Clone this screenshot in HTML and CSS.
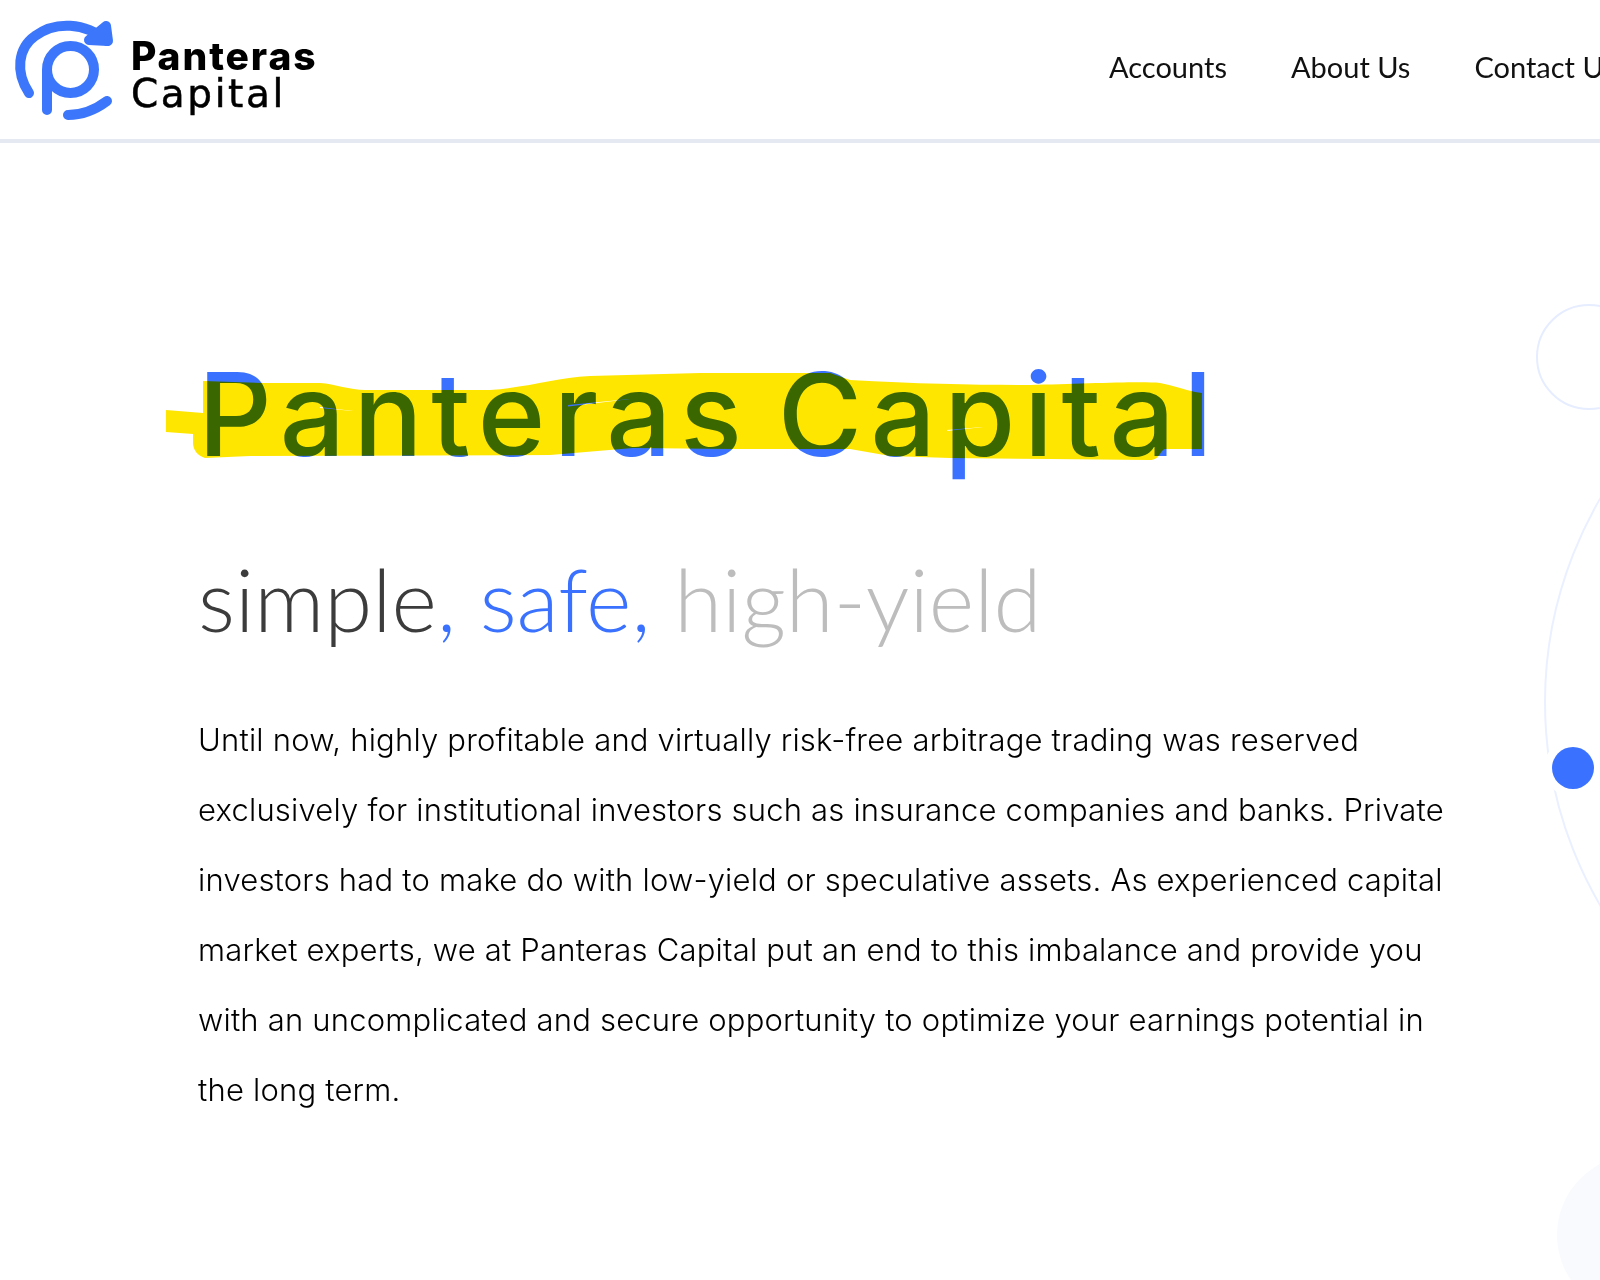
FILE: index.html
```html
<!DOCTYPE html>
<html lang="en">
<head>
    <meta charset="UTF-8">
    <meta name="viewport" content="width=device-width, initial-scale=1.0">
    <title>Panteras Capital</title>
    <link rel="stylesheet" href="styles.css">
</head>
<body>
    <header class="site-header">
        <a class="logo" href="#">
            <svg class="logo-mark" viewBox="0 0 110 120" width="110" height="120">
                <g fill="none" stroke="#3b76fb" stroke-width="10" stroke-linecap="round" stroke-linejoin="round">
                    <path d="M19 83 C5 62 8 38 25 26 C45 11 75 12 97 31"/>
                    <path d="M37 100 V59.5 A23.5 23.5 0 1 1 60.5 83 A23.5 23.5 0 0 1 37 59.5"/>
                    <path d="M58 105 C72 105 85 100 97 91"/>
                    <path d="M96 16 L98 31 L79 30 Z" fill="#3b76fb"/>
                </g>
            </svg>
            <span class="logo-text"><b>Panteras</b><span>Capital</span></span>
        </a>
        <nav class="main-nav">
            <a href="#">Accounts</a>
            <a href="#">About Us</a>
            <a href="#">Contact Us</a>
        </nav>
    </header>

    <main class="hero">
        <div class="decor" aria-hidden="true">
            <div class="ring-small"></div>
            <div class="ring-big"></div>
            <div class="dot"></div>
            <div class="blob"></div>
        </div>

        <div class="title-wrap">
            <h1>Panteras Capital</h1>
            <svg class="marker" viewBox="0 0 1050 95" width="1050" height="95">
                <path fill="#ffe600" fill-rule="evenodd" d="M6 40 L43 43 L43 11 L102 13 L160 13 C175 14 190 20 205 20 L330 20 C370 17 395 8 430 6 L540 3 L670 3 L690 10 C760 14 820 15 870 15 C920 14 980 11 1000 13 C1012 15 1025 20 1035 22 L1042 23 L1042 79 L1005 79 C1000 80 1000 90 990 90 L890 89 L790 88 L730 86 L690 79 L573 79 L473 78 L390 85 L90 86 L45 88 C38 86 33 80 33 73 L33 64 L6 62 Z M160 37 L193 41 L160 38 Z M408 35 L470 29 L408 36.5 Z M787 60 L823 57 L787 61 Z"/>
            </svg>
        </div>

        <h2 class="tagline">simple<span class="blue">, safe,</span> <span class="grey">high-yield</span></h2>

        <p class="intro">Until now, highly profitable and virtually risk-free arbitrage trading was reserved exclusively for institutional investors such as insurance companies and banks. Private investors had to make do with low-yield or speculative assets. As experienced capital market experts, we at Panteras Capital put an end to this imbalance and provide you with an uncomplicated and secure opportunity to optimize your earnings potential in the long term.</p>
    </main>
</body>
</html>
```

FILE: styles.css
```css
html, body {
    margin: 0;
    padding: 0;
    height: 1280px;
    overflow: hidden;
    background-color: #fff;
}
body {
    font-family: "Lato", "Liberation Sans", sans-serif;
    color: #111;
}
a {
    color: inherit;
    text-decoration: none;
}
.site-header {
    height: 143px;
    box-sizing: border-box;
    border-bottom: 4px solid #e4e9f2;
    display: grid;
    grid-template-columns: 1109px 1fr;
    align-items: start;
    white-space: nowrap;
}
.logo {
    display: flex;
    align-items: center;
    gap: 11px;
    margin: 10px 0 0 10px;
}
.logo-text {
    display: flex;
    flex-direction: column;
    margin-top: 9px;
    font-family: "DejaVu Sans", sans-serif;
    font-size: 39px;
    line-height: 38px;
    letter-spacing: 2.6px;
    -webkit-text-stroke: 0.5px #000;
    color: #000;
}
.logo-text b {
    font-family: "Inter", sans-serif;
    font-weight: 800;
    letter-spacing: 1.9px;
    -webkit-text-stroke: 0;
}
.main-nav {
    display: flex;
    gap: 64px;
    margin-top: 50px;
    font-size: 29px;
    line-height: 34px;
}
.hero {
    position: relative;
    height: 1137px;
    padding: 214px 0 0 198px;
    box-sizing: border-box;
}
.title-wrap {
    position: relative;
    height: 115px;
}
h1 {
    margin: 0;
    font-family: "Inter", sans-serif;
    font-size: 115px;
    line-height: 115px;
    font-weight: 550;
    letter-spacing: 8.5px;
    word-spacing: -12px;
    color: #3a72ff;
    white-space: nowrap;
}
.marker {
    position: absolute;
    left: -38px;
    top: 13px;
    mix-blend-mode: multiply;
}
.tagline {
    margin: 77px 0 0;
    font-size: 87px;
    line-height: 100px;
    font-weight: 300;
    color: #3c3c3c;
}
.blue {
    color: #3a72ff;
}
.grey {
    color: #bdbdbd;
}
.intro {
    margin: 56px 0 0;
    width: 1270px;
    font-family: "Inter", sans-serif;
    font-size: 31px;
    line-height: 70px;
    font-weight: 300;
    letter-spacing: 0.2px;
    color: #000;
}
.decor div {
    position: absolute;
    box-sizing: border-box;
    border-radius: 50%;
}
.ring-small {
    left: 1536px;
    top: 161px;
    width: 106px;
    height: 106px;
    border: 2px solid #e6edff;
}
.ring-big {
    left: 1544px;
    top: 156px;
    width: 806px;
    height: 806px;
    border: 2px solid #eaf0ff;
}
.dot {
    left: 1552px;
    top: 604px;
    width: 42px;
    height: 42px;
    background-color: #3a72ff;
    box-shadow: 0 0 0 8px #fff;
}
.blob {
    left: 1557px;
    top: 1012px;
    width: 160px;
    height: 160px;
    background-color: #f9fafe;
}
```
